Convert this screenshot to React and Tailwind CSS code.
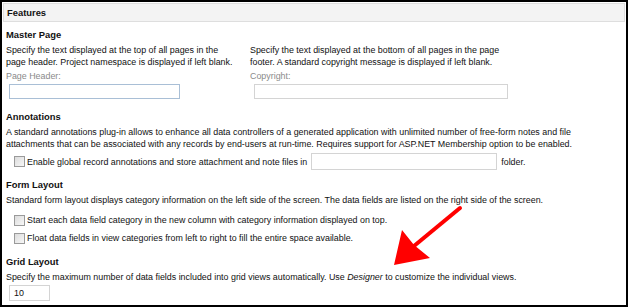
export default function App() {
  return (
    <div className="w-[629px] h-[308px] bg-white font-['Liberation_Sans',Arial,sans-serif] text-[8.9px] leading-[12px] text-[#111]">
      <div className="relative w-[628px] h-[307px] border-2 border-black pl-[1px] pr-[1px] pt-[1px]">
        {/* Header */}
        <div className="h-[19px] bg-[#f3f3f3] border border-[#dedede] flex items-center pl-[3px] font-bold text-[9.4px]">
          Features
        </div>

        <div className="pl-[3px]">
          {/* Master Page */}
          <div className="mt-[7px] font-bold text-[9.4px]">Master Page</div>
          <div className="mt-[3px] flex">
            <div className="w-[244px]">
              <div className="whitespace-nowrap">
                Specify the text displayed at the top of all pages in the
                <br />
                page header. Project namespace is displayed if left blank.
              </div>
              <div className="mt-[2px] text-[#8a8a8a]">Page Header:</div>
              <div className="mt-[2px] ml-[3px] w-[171px] h-[15px] border border-[#a9bfd6] bg-white" />
            </div>
            <div>
              <div className="whitespace-nowrap">
                Specify the text displayed at the bottom of all pages in the page
                <br />
                footer. A standard copyright message is displayed if left blank.
              </div>
              <div className="mt-[2px] text-[#8a8a8a]">Copyright:</div>
              <div className="mt-[2px] ml-[4px] w-[254px] h-[15px] border border-[#d4d4d4] bg-white" />
            </div>
          </div>

          {/* Annotations */}
          <div className="mt-[12px] font-bold text-[9.4px]">Annotations</div>
          <div className="mt-[3px] whitespace-nowrap">
            A standard annotations plug-in allows to enhance all data controllers of a generated application with unlimited number of free-form notes and file
            <br />
            attachments that can be associated with any records by end-users at run-time. Requires support for ASP.NET Membership option to be enabled.
          </div>
          <div className="mt-[3px] flex items-center h-[17px] pl-[8px] whitespace-nowrap">
            <span className="w-[11px] h-[11px] border border-[#9a9a9a] bg-gradient-to-br from-[#dcdcdc] to-[#f7f7f7] mr-[2px]" />
            <span>Enable global record annotations and store attachment and note files in</span>
            <span className="ml-[4px] w-[186px] h-[17px] border border-[#d4d4d4] bg-white" />
            <span className="ml-[4px]">folder.</span>
          </div>

          {/* Form Layout */}
          <div className="mt-[9px] font-bold text-[9.4px]">Form Layout</div>
          <div className="mt-[3px] whitespace-nowrap">
            Standard form layout displays category information on the left side of the screen. The data fields are listed on the right side of the screen.
          </div>
          <div className="flex items-center h-[18px] pl-[8px] mt-[5px] whitespace-nowrap">
            <span className="w-[11px] h-[11px] border border-[#9a9a9a] bg-gradient-to-br from-[#dcdcdc] to-[#f7f7f7] mr-[2px]" />
            <span>Start each data field category in the new column with category information displayed on top.</span>
          </div>
          <div className="flex items-center h-[18px] pl-[8px] whitespace-nowrap">
            <span className="w-[11px] h-[11px] border border-[#9a9a9a] bg-gradient-to-br from-[#dcdcdc] to-[#f7f7f7] mr-[2px]" />
            <span>Float data fields in view categories from left to right to fill the entire space available.</span>
          </div>

          {/* Grid Layout */}
          <div className="mt-[9px] font-bold text-[9.4px]">Grid Layout</div>
          <div className="mt-[3px] whitespace-nowrap">
            Specify the maximum number of data fields included into grid views automatically. Use <i>Designer</i> to customize the individual views.
          </div>
          <div className="mt-[2px] ml-[3px] w-[41px] h-[16px] border border-[#d4d4d4] bg-white flex items-center pl-[4px]">
            10
          </div>
        </div>

        {/* Red arrow */}
        <svg className="absolute left-0 top-0 pointer-events-none" width="629" height="308" viewBox="0 0 629 308">
          <line x1="458" y1="206" x2="412" y2="244" stroke="#ff0000" strokeWidth="4" strokeLinecap="round" />
          <polygon points="392,263 400,228 412,243 428,256" fill="#ff0000" />
        </svg>
      </div>
    </div>
  );
}
